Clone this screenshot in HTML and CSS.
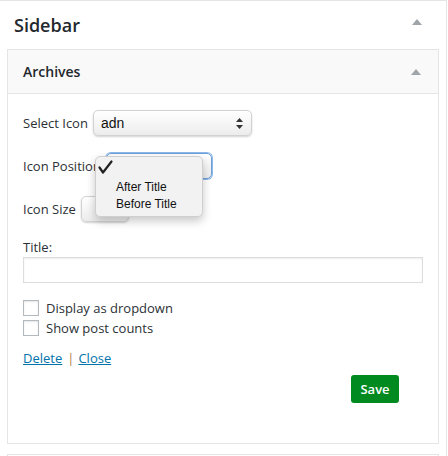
FILE: index.html
```html
<!DOCTYPE html>
<html>
<head>
<meta charset="utf-8">
<link rel="stylesheet" href="styles.css">
</head>
<body>
<div class="sidebar">
  <div class="sidebar-head">
    <h2 class="sidebar-title">Sidebar</h2>
    <span class="tri tri-outer"></span>
  </div>
  <div class="widget">
    <div class="widget-head">
      <h3 class="widget-title">Archives</h3>
      <span class="tri tri-inner"></span>
    </div>
    <div class="widget-body">
      <div class="row row-first">
        <label class="lbl">Select Icon</label>
        <div class="select sel-icon"><span class="sel-text">adn</span><svg class="arrows" width="7" height="11" viewBox="0 0 7 11"><path d="M3.5 0L7 4H0Z M3.5 11L0 7H7Z" fill="#333"/></svg></div>
      </div>
      <div class="row">
        <label class="lbl">Icon Position</label>
        <div class="select sel-pos focus"><span class="sel-text"></span><svg class="arrows" width="7" height="11" viewBox="0 0 7 11"><path d="M3.5 0L7 4H0Z M3.5 11L0 7H7Z" fill="#333"/></svg></div>
      </div>
      <div class="row">
        <label class="lbl">Icon Size</label>
        <div class="select sel-size"><span class="sel-text"></span></div>
      </div>
      <label class="title-lbl">Title:</label>
      <div class="text-input"></div>
      <div class="checks">
        <div class="check"><span class="box"></span><span>Display as dropdown</span></div>
        <div class="check"><span class="box"></span><span>Show post counts</span></div>
      </div>
      <div class="links"><a href="#">Delete</a><span class="sep">|</span><a href="#">Close</a></div>
      <div class="actions"><button class="save">Save</button></div>

      <div class="popup">
        <div class="opt opt-checked"><svg width="15" height="14" viewBox="0 0 15 14"><path d="M1.5 7.5L5 12.5L13.5 1.5" fill="none" stroke="#222" stroke-width="2.2" stroke-linecap="round" stroke-linejoin="round"/></svg></div>
        <div class="opt">After Title</div>
        <div class="opt">Before Title</div>
      </div>
    </div>
  </div>
  <div class="widget widget-next"></div>
</div>
</body>
</html>
```
FILE: styles.css
```css
* { box-sizing: border-box; }
html, body { margin: 0; padding: 0; background: #fff; }
body {
  font-family: "Open Sans", "Liberation Sans", sans-serif;
  color: #23282d;
  font-size: 13px;
  overflow: hidden;
}
.sidebar {
  width: 447px;
  height: 470px;
  border-top: 1px solid #e5e5e5;
  border-right: 1px solid #e5e5e5;
}
.sidebar-head {
  height: 48px;
  display: flex;
  align-items: center;
  justify-content: space-between;
  padding: 0 24px 0 14px;
}
.sidebar-title {
  margin: 0;
  font-size: 18px;
  font-weight: 600;
  line-height: 24px;
  color: #23282d;
}
.tri {
  width: 0; height: 0;
  border-left: 5px solid transparent;
  border-right: 5px solid transparent;
  border-bottom: 6px solid #a0a5aa;
}
.tri-outer { margin-top: -6px; }
.widget {
  margin-left: 7px;
  width: 432px;
  border: 1px solid #e5e5e5;
  background: #fff;
}
.widget-head {
  height: 44px;
  background: #f9f9f9;
  border-bottom: 1px solid #e5e5e5;
  display: flex;
  align-items: center;
  justify-content: space-between;
  padding: 0 17px 0 15px;
}
.widget-title {
  margin: 0;
  font-size: 14px;
  font-weight: 600;
  line-height: 20px;
  color: #23282d;
}
.widget-body {
  position: relative;
  padding: 16px 15px 40px 15px;
}
.row {
  display: flex;
  align-items: center;
  gap: 5px;
  height: 26px;
  margin-top: 17px;
}
.row-first { margin-top: 0; }
.lbl { color: #2c3136; font-size: 13px; }
.select {
  height: 26px;
  border-radius: 5px;
  background: linear-gradient(#ffffff, #f4f4f4 60%, #ececec);
  border: 1px solid #d2d2d2;
  box-shadow: 0 1px 2px rgba(0,0,0,0.18);
  display: flex;
  align-items: center;
  justify-content: space-between;
  padding: 0 8px 0 7px;
}
.sel-text {
  font-family: "Liberation Sans", Arial, sans-serif;
  font-size: 14px;
  color: #111;
}
.sel-icon { width: 159px; }
.sel-pos { width: 106px; }
.sel-size { width: 48px; }
.focus {
  border-color: #6d9fd9;
  box-shadow: 0 0 0 1px #8db8e8;
}
.title-lbl {
  display: block;
  margin-top: 16px;
  line-height: 18px;
  color: #2c3136;
}
.text-input {
  margin-top: 1px;
  width: 400px;
  height: 26px;
  border: 1px solid #ddd;
  box-shadow: inset 0 1px 2px rgba(0,0,0,0.07);
  background: #fff;
}
.checks { margin-top: 17px; display: flex; flex-direction: column; gap: 4px; }
.check {
  display: flex;
  align-items: center;
  gap: 7px;
  height: 16px;
  color: #2c3136;
}
.box {
  width: 16px; height: 16px;
  border: 1px solid #b4b9be;
  background: #fff;
  box-shadow: inset 0 1px 2px rgba(0,0,0,0.1);
}
.links {
  margin-top: 13px;
  line-height: 18px;
}
.links a { color: #0073aa; text-decoration: underline; }
.sep { color: #b07d45; margin: 0 4px 0 5px; }
.actions {
  display: flex;
  justify-content: flex-end;
  padding-right: 24px;
  margin-top: 8px;
}
.save {
  width: 48px;
  height: 28px;
  border: none;
  border-radius: 3px;
  background: #008a20;
  color: #fff;
  font-family: "Open Sans", "Liberation Sans", sans-serif;
  font-weight: 600;
  font-size: 13px;
  padding: 0;
}
.popup {
  position: absolute;
  left: 87px;
  top: 62px;
  width: 108px;
  height: 61px;
  background: #f2f2f2;
  border: 1px solid #cfcfcf;
  border-radius: 5px;
  box-shadow: 0 4px 10px rgba(0,0,0,0.22);
  padding-top: 2px;
  font-family: "Liberation Sans", Arial, sans-serif;
  font-size: 12px;
  color: #111;
}
.opt { padding-left: 20px; height: 17px; line-height: 17px; }
.opt-checked { padding-left: 2px; height: 20px; padding-top: 1px; }
.widget-next { margin-top: 10px; height: 20px; border-bottom: none; }
```
